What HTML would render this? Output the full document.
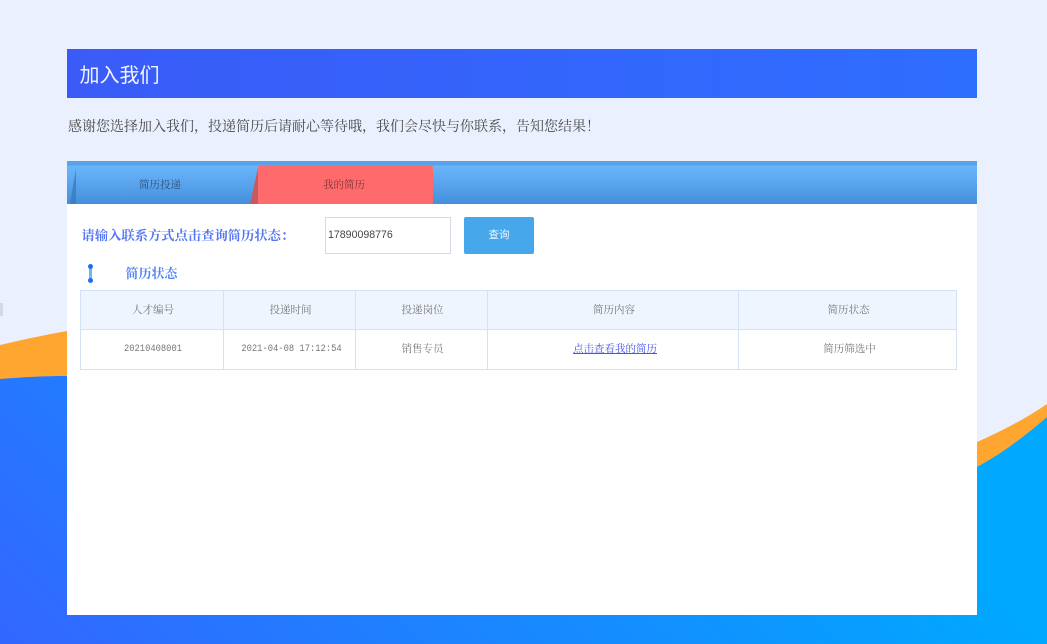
<!DOCTYPE html>
<html lang="zh">
<head>
<meta charset="utf-8">
<title>加入我们</title>
<style>
html,body{margin:0;padding:0;background:#ebf0fe;}
body{width:1047px;height:644px;overflow:hidden;position:relative;font-family:"Liberation Serif","Noto Serif CJK SC",serif;}
#w{position:absolute;left:0;top:0;width:1047px;height:644px;filter:blur(.35px);}
.a{position:absolute;white-space:nowrap;}
svg{display:block;}
.t{position:absolute;left:80px;top:290px;width:877px;height:80px;}
.c{position:absolute;text-align:center;font-size:10.5px;color:#777;line-height:39px;height:39px;}
.m{font-family:"Liberation Mono","Noto Serif CJK SC",monospace;font-size:8.8px;}
.m span{display:inline-block;transform:scaleY(1.15);}
.l{position:absolute;background:#d5e1f8;}
</style>
</head>
<body>
<div id="w">
<svg class="a" style="left:0;top:0" width="1047" height="644" viewBox="0 0 1047 644">
<defs>
<linearGradient id="g" gradientUnits="userSpaceOnUse" x1="0" y1="644" x2="523" y2="121">
<stop offset="0" stop-color="#3366ff"/>
<stop offset="1" stop-color="#00a8ff"/>
</linearGradient>
</defs>
<path d="M0 345 C25 339 45 335 67 331 L67 420 L0 420Z" fill="#ffa631"/>
<path d="M977 442 C1000 432 1025 419 1047 404 L1047 480 L977 480Z" fill="#ffa631"/>
<path d="M0 379 C25 377 45 376 67 376 L400 400 L977 467 C1003 453 1025 436 1047 417 L1047 644 L0 644Z" fill="url(#g)"/>
<rect x="0" y="303" width="3" height="13" fill="#c4c8d2" opacity=".6"/>
</svg>

<div class="a" style="left:67px;top:49px;width:910px;height:49px;background:linear-gradient(90deg,#3a5bf7 0%,#2e6eff 100%);"></div>
<div class="a" style="left:79.5px;top:61.5px;font:20px/29px 'Liberation Sans','Noto Sans CJK SC',sans-serif;color:#f2f5ff;">加入我们</div>
<div class="a" style="left:68px;top:118px;font-size:14px;line-height:20px;color:#4a4a4a;">感谢您选择加入我们，投递简历后请耐心等待哦，我们会尽快与你联系，告知您结果！</div>

<div class="a" style="left:67px;top:161px;width:910px;height:454px;background:#fff;"></div>
<div class="a" style="left:67px;top:161px;width:910px;height:43px;background:linear-gradient(180deg,#5aa3ea 0,#5aa3ea 4px,#6ab6fb 5px,#4590dc 100%);"></div>
<svg class="a" style="left:67px;top:165px" width="200" height="39" viewBox="0 0 200 39">
<path d="M3 39 L9 3 L9 39Z" fill="#3a78b8" opacity=".75"/>
<path d="M183 39 L191 3 L191 39Z" fill="#c85a5e"/>
</svg>
<div class="a" style="left:258px;top:165px;width:175px;height:39px;background:#ff6b6d;border-radius:3px 3px 0 0;"></div>
<div class="a" style="left:76px;top:166px;width:168px;text-align:center;font-size:10.5px;line-height:39px;color:#2f4f78;">简历投递</div>
<div class="a" style="left:258px;top:166px;width:172px;text-align:center;font-size:10.5px;line-height:39px;color:#803438;">我的简历</div>

<div class="a" style="left:81.5px;top:226px;font-size:13.3px;line-height:20px;color:#5476f4;font-weight:bold;">请输入联系方式点击查询简历状态：</div>
<div class="a" style="left:325px;top:217px;width:124px;height:35px;border:1px solid #d8d9e6;background:#fff;font:10.6px/35px 'Liberation Sans',sans-serif;color:#444;text-indent:2px;">17890098776</div>
<div class="a" style="left:464px;top:217px;width:70px;height:37px;background:#46a8ea;border-radius:2px;text-align:center;color:#eef7ff;font:10.5px/37px 'Liberation Sans','Noto Sans CJK SC',sans-serif;">查询</div>

<div class="a" style="left:88.5px;top:266px;width:3px;height:16px;background:#6cb8f8;"></div>
<div class="a" style="left:87.5px;top:264px;width:5px;height:5px;border-radius:50%;background:#1f6ff2;"></div>
<div class="a" style="left:87.5px;top:278px;width:5px;height:5px;border-radius:50%;background:#1f6ff2;"></div>
<div class="a" style="left:125.5px;top:264px;font-size:13px;line-height:20px;color:#5585f5;font-weight:bold;">简历状态</div>

<div class="t">
<div class="a" style="left:0;top:0;width:877px;height:40px;background:#eff5fe;"></div>
<div class="l" style="left:0;top:0;width:877px;height:1px;"></div>
<div class="l" style="left:0;top:39px;width:877px;height:1px;"></div>
<div class="l" style="left:0;top:79px;width:877px;height:1px;"></div>
<div class="l" style="left:0;top:0;width:1px;height:80px;"></div>
<div class="l" style="left:143px;top:0;width:1px;height:80px;"></div>
<div class="l" style="left:275px;top:0;width:1px;height:80px;"></div>
<div class="l" style="left:407px;top:0;width:1px;height:80px;"></div>
<div class="l" style="left:658px;top:0;width:1px;height:80px;"></div>
<div class="l" style="left:876px;top:0;width:1px;height:80px;"></div>

<div class="c" style="left:1.5px;top:1px;width:143px;">人才编号</div>
<div class="c" style="left:144.5px;top:1px;width:132px;">投递时间</div>
<div class="c" style="left:276.5px;top:1px;width:132px;">投递岗位</div>
<div class="c" style="left:408.5px;top:1px;width:251px;">简历内容</div>
<div class="c" style="left:659.5px;top:1px;width:218px;">简历状态</div>

<div class="c m" style="left:1.5px;top:40px;width:143px;"><span>20210408001</span></div>
<div class="c m" style="left:145.5px;top:40px;width:132px;"><span>2021-04-08 17:12:54</span></div>
<div class="c" style="left:276.5px;top:40px;width:132px;">销售专员</div>
<div class="c" style="left:409.5px;top:40px;width:251px;"><span style="color:#4a55e8;text-decoration:underline;">点击查看我的简历</span></div>
<div class="c" style="left:660.5px;top:40px;width:218px;">简历筛选中</div>
</div>
</div>
</body>
</html>
